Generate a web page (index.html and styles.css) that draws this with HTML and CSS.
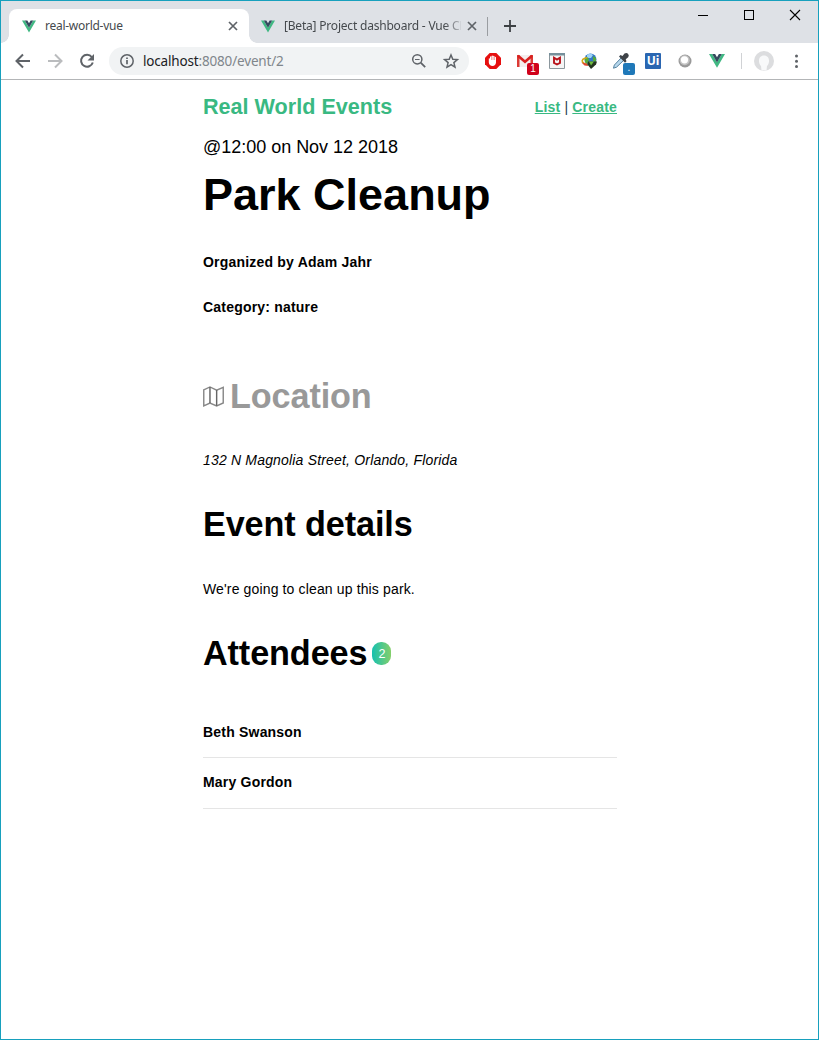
FILE: index.html
```html
<!DOCTYPE html>
<html lang="en">
<head>
<meta charset="utf-8">
<title>real-world-vue</title>
<link rel="stylesheet" href="styles.css">
</head>
<body>
<svg class="defs" width="0" height="0" aria-hidden="true">
  <symbol id="vue" viewBox="0 0 16 14"><path fill="#41b883" d="M0 0h3.2L8 8.3 12.800 0H16L8 13.800z"/><path fill="#35495e" d="M3.200 0h2.900L8 3.200 9.900 0h2.900L8 8.400z"/></symbol>
  <symbol id="close" viewBox="0 0 10 10"><path fill="none" stroke="#5f6368" stroke-width="1.700" d="M1 1l8 8M9 1L1 9"/></symbol>
</svg>
<div class="window">
  <div class="tabstrip">
    <div class="tab tab-active">
      <svg class="favicon"><use href="#vue"/></svg>
      <span class="tab-title">real-world-vue</span>
      <svg class="tab-close"><use href="#close"/></svg>
    </div>
    <div class="tab tab-idle">
      <svg class="favicon"><use href="#vue"/></svg>
      <span class="tab-title tab-title-faded">[Beta] Project dashboard - Vue CLI</span>
      <svg class="tab-close"><use href="#close"/></svg>
    </div>
    <svg class="new-tab" viewBox="0 0 12 12"><path stroke="#3c4043" stroke-width="1.800" d="M6 0v12M0 6h12"/></svg>
    <div class="window-controls">
      <svg viewBox="0 0 46 30"><path stroke="#000" d="M18 15.500h10"/></svg>
      <svg viewBox="0 0 46 30"><rect x="18.500" y="10.500" width="9" height="9" fill="none" stroke="#000"/></svg>
      <svg viewBox="0 0 46 30"><path stroke="#000" stroke-width="1.100" d="M18 10l10 10M28 10L18 20"/></svg>
    </div>
  </div>

  <div class="toolbar">
    <svg class="tool" viewBox="0 0 32 32"><path fill="none" stroke="#5f6368" stroke-width="2" d="M23 16H10M16 9.500L9.500 16l6.500 6.500"/></svg>
    <svg class="tool" viewBox="0 0 32 32"><path fill="none" stroke="#babcbe" stroke-width="2" d="M9 16h13M16 9.500l6.500 6.500-6.500 6.500"/></svg>
    <svg class="tool" viewBox="0 0 32 32"><path fill="none" stroke="#5f6368" stroke-width="2" d="M20.800 12a6 6 0 1 0 1 5.500"/><path fill="#5f6368" d="M23 9v6.500h-6.500z"/></svg>
    <div class="omnibox">
      <svg class="info" viewBox="0 0 16 16"><circle cx="8" cy="8" r="6.200" fill="none" stroke="#5f6368" stroke-width="1.500"/><path stroke="#5f6368" stroke-width="1.700" d="M8 7v4.300M8 4.500v1.600"/></svg>
      <span class="url"><span class="host">localhost</span>:8080/event/2</span>
      <svg class="tool" viewBox="0 0 32 32"><circle cx="14.300" cy="14.300" r="4.600" fill="none" stroke="#5f6368" stroke-width="1.500"/><path stroke="#5f6368" stroke-width="1.800" d="M17.700 17.700l4.500 4.500"/><path stroke="#5f6368" d="M12 14.500h4.600"/></svg>
      <svg class="tool" viewBox="0 0 32 32"><path fill="none" stroke="#5f6368" stroke-width="1.500" d="M16 10l1.800 4.200 4.600.4-3.500 3 1.100 4.500-4-2.400-4 2.400 1.100-4.500-3.500-3 4.600-.4z"/></svg>
    </div>
    <div class="extensions">
      <svg class="tool" viewBox="0 0 32 32"><path fill="#e60f0f" d="M12.700 8h6.600l4.700 4.700v6.600L19.300 24h-6.600L8 19.300v-6.600z"/><path fill="#fff" d="M11.800 13.500q.8-.6 1.200.2v-2q.8-1 1.500 0v-.8q.8-1 1.500 0v.3q.8-1 1.500 0v1q.8-1 1.500 0v5.300q-.4 3.300-3.400 3.500-3.400-.1-3.800-3.500z"/><path stroke="#e60f0f" stroke-width=".4" d="M14.600 11.500v3.500M16.100 11.500v3.500M17.600 12v3"/></svg>
      <span class="badged">
        <svg class="tool" viewBox="0 0 32 32"><path fill="#f4eeee" d="M8 10h16v12H8z"/><path fill="#dc3a35" d="M8 10h2.500v12H8zM21.500 10H24v12h-2.500z"/><path fill="none" stroke="#d8201e" stroke-width="2.600" d="M9 10.700l7 6 7-6"/></svg>
        <span class="badge badge-red">1</span>
      </span>
      <svg class="tool" viewBox="0 0 32 32"><path fill="#f5f5f5" stroke="#8b979d" d="M8.500 8.500h15v15h-15z"/><path fill="#76909b" d="M8 8h16v2.500H8z"/><path fill="none" stroke="#b8141c" stroke-width="1.900" d="M13 12.800v5.200l3 1.400 3-1.400v-5.200L16 14.600z"/></svg>
      <svg class="tool" viewBox="0 0 32 32"><circle cx="17.500" cy="14.500" r="6" fill="#3478c6"/><path fill="#9ed3f6" d="M14 10q3-3 6 0l-2 3h-4z"/><path fill="#55aa3b" d="M12 13q4-2 4 2l-2 4q-3-2-2-6zM20 11l3 2v4l-3-1z"/><path fill="none" stroke="#d5a913" stroke-width="1.600" d="M14 12.500q-6 1.500-4.500 4.500 1.500 2 5 2.500"/><path fill="#dc4731" d="M8.500 17.500l5 1 2 2.500-4-.5z"/><path fill="#25351f" d="M15 16.500h9l-1 3-5 4.500-3.500-4.500z"/><path fill="#70bd3e" d="M16 16.500h5l-3 4z"/></svg>
      <span class="badged">
        <svg class="tool" viewBox="0 0 32 32"><path fill="#b8d8ed" stroke="#54819f" d="M16.500 12.500l2.500 2.500-7.500 7.200-3 1 .8-3.100z"/><path fill="#3e4348" d="M14 11.500l1.500-1.500 2 1 2-2.500q2-1.300 3.500.3t.2 3.500l-2.500 2 .8 2-1.500 1.500z"/></svg>
        <span class="badge badge-blue">.</span>
      </span>
      <span class="ui-tile">Ui</span>
      <svg class="tool" viewBox="0 0 32 32"><circle cx="16" cy="16" r="6.500" fill="#999"/><circle cx="15.700" cy="15.300" r="5" fill="#c3c3c3"/><circle cx="15.500" cy="14.800" r="3.600" fill="#fff"/></svg>
      <svg class="tool" viewBox="-8 -9 32 32"><use href="#vue" width="16" height="14"/></svg>
    </div>
    <span class="divider"></span>
    <svg class="tool" viewBox="0 0 32 32"><circle cx="16" cy="16" r="10" fill="#dcdddf"/><path fill="#f8f9fa" d="M16 10.500c3.500 0 5.200 2.600 5 6-.2 2.300-1 3.600-2 4.500l-.5 4.300q-2.500.6-5 0L13 21c-1-.9-1.800-2.200-2-4.500-.2-3.400 1.500-6 5-6z"/></svg>
    <svg class="tool" viewBox="0 0 32 32"><g fill="#5f6368"><circle cx="16.500" cy="11" r="1.500"/><circle cx="16.500" cy="16.200" r="1.500"/><circle cx="16.500" cy="21.400" r="1.500"/></g></svg>
  </div>

  <main class="page">
    <header class="nav">
      <div class="brand">Real World Events</div>
      <nav class="links"><a href="#">List</a> | <a href="#">Create</a></nav>
    </header>
    <div class="date">@12:00 on Nov 12 2018</div>
    <h1 class="title">Park Cleanup</h1>
    <h5 class="meta organizer">Organized by Adam Jahr</h5>
    <h5 class="meta category">Category: nature</h5>
    <h2 class="heading location">
      <svg class="map" viewBox="0 0 22 22"><path fill="none" stroke="#888" stroke-width="1.500" d="M.8 4L7.300 1l7 3.300 6.900-3v16.500l-6.900 3-7-3-6.500 3z"/><path stroke="#666" stroke-width="1.500" d="M7.300 1v16.800M14.300 4.300v16.500"/></svg>
      <span>Location</span>
    </h2>
    <address class="address">132 N Magnolia Street, Orlando, Florida</address>
    <h2 class="heading">Event details</h2>
    <p class="description">We're going to clean up this park.</p>
    <h2 class="heading attendees">Attendees <span class="count">2</span></h2>
    <ul class="people">
      <li>Beth Swanson</li>
      <li>Mary Gordon</li>
    </ul>
  </main>
</div>
</body>
</html>
```
FILE: styles.css
```css
* { box-sizing: border-box; }
body { margin: 0; background: #fff; color: #000; }
.defs { position: absolute; }
svg { display: block; flex: none; }

.window {
  height: 1040px;
  border: 1px solid #17a0bd;
  background: #fff;
  overflow: hidden;
}

/* Browser chrome */
.tabstrip {
  display: flex;
  height: 42px;
  padding: 8px 0 0 8px;
  background: #dee1e6;
  font-family: "Noto Sans", sans-serif;
  font-size: 12px;
  letter-spacing: -0.27px;
  color: #45494d;
}
.tab { display: flex; align-items: center; height: 34px; padding: 0 11px 0 13px; }
.tab-active {
  position: relative;
  width: 240px;
  background: #fff;
  border-radius: 8px 8px 0 0;
}
.tab-active::before,
.tab-active::after {
  content: "";
  position: absolute;
  bottom: 0;
  width: 8px;
  height: 8px;
}
.tab-active::before { left: -8px; background: radial-gradient(circle at 0 0, transparent 7.5px, #fff 8px); }
.tab-active::after { right: -8px; background: radial-gradient(circle at 100% 0, transparent 7.5px, #fff 8px); }
.tab-idle { position: relative; width: 239px; padding-left: 12px; }
.tab-idle::after {
  content: "";
  position: absolute;
  right: 0;
  top: 8px;
  width: 1px;
  height: 19px;
  background: #9a9da1;
}
.favicon { width: 14px; height: 13px; }
.tab-title { flex: 1; margin-left: 9px; white-space: nowrap; overflow: hidden; line-height: 18px; }
.tab-title-faded { -webkit-mask-image: linear-gradient(90deg, #000 160px, transparent 182px); margin-right: 6px; letter-spacing: -0.2px; }
.tab-close { width: 10px; height: 10px; }
.new-tab { width: 12px; height: 12px; margin: 11px 0 0 16px; }
.window-controls { display: flex; margin: -9px 0 0 auto; }
.window-controls svg { width: 46px; height: 30px; }

.toolbar {
  display: flex;
  align-items: center;
  height: 37px;
  padding-left: 6px;
  border-bottom: 1px solid #b3b5b7;
}
.tool { width: 32px; height: 32px; }
.omnibox {
  display: flex;
  align-items: center;
  width: 360px;
  height: 28px;
  margin: 0 8px 0 6px;
  padding: 0 2px 0 10px;
  border-radius: 14px;
  background: #f1f3f4;
}
.info { width: 16px; height: 16px; }
.url {
  flex: 1;
  margin-left: 8px;
  font: 13.5px/20px "Noto Sans", sans-serif;
  letter-spacing: -0.17px;
  color: #80868b;
}
.host { color: #202124; }
.extensions { display: flex; align-items: center; }
.badged { position: relative; }
.badge {
  position: absolute;
  left: 18px;
  top: 18px;
  width: 12px;
  height: 12px;
  border-radius: 2px;
  color: #fff;
  font: 10px/12px "Liberation Sans", sans-serif;
  text-align: center;
}
.badge-red { background: #d0021b; }
.badge-blue { background: #1f78b8; line-height: 10px; }
.ui-tile {
  width: 16px;
  height: 16px;
  margin: 0 8px;
  border-radius: 1px;
  background: #2a66b1;
  color: #fff;
  font: bold 12px/16px "Noto Sans", sans-serif;
  text-align: center;
}
.divider { width: 1px; height: 16px; margin: 0 6px 0 8px; background: #d0d2d5; }

/* Event page */
.page {
  width: 414px;
  margin: 14px auto 0 202px;
  font: 14px/20px "Liberation Sans", Arial, sans-serif;
}
.nav { display: flex; justify-content: space-between; height: 26px; }
.brand { font-size: 21.6px; line-height: 26px; font-weight: bold; color: #39b982; }
.links { padding-top: 3px; font-size: 14px; letter-spacing: 0.18px; color: #2c3e50; }
.links a { font-weight: bold; color: #39b982; }
.date { margin-top: 16px; font-size: 18px; line-height: 22px; letter-spacing: -0.02px; }
.title { margin: 11px 0 0; font-size: 45px; line-height: 52px; }
.meta { margin: 0; font-size: 14px; letter-spacing: 0.2px; }
.organizer { margin-top: 31px; }
.category { margin-top: 25px; }
.heading { margin: 34px 0 0; font-size: 34.2px; line-height: 40px; letter-spacing: -0.1px; }
.location { display: flex; align-items: center; gap: 6px; margin-top: 59px; color: #999; }
.map { width: 21px; height: 21px; }
.address { margin-top: 34px; letter-spacing: 0.18px; }
.description { margin: 35px 0 0; letter-spacing: 0.14px; }
.attendees { display: flex; align-items: center; gap: 5px; }
.count {
  width: 19px;
  height: 23px;
  border-radius: 9px;
  background: linear-gradient(to right, #16c0b0, #84cf6a);
  color: #fff;
  font-size: 12.6px;
  font-weight: normal;
  letter-spacing: 0;
  line-height: 24px;
  text-align: center;
}
.people { margin: 34px 0 0; padding: 0; list-style: none; font-weight: bold; letter-spacing: 0.2px; }
.people li { height: 51px; padding-top: 15px; border-bottom: 1px solid #e5e5e5; }
.people li + li { padding-top: 14px; }
```
